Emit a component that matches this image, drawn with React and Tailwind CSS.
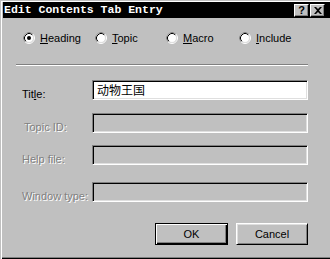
import React from "react";

const sans = "font-['Liberation_Sans',Arial,sans-serif] text-[11px]";

const Radio = ({ checked }) => (
  <svg width="12" height="12" viewBox="0 0 12 12" className="shrink-0">
    <circle cx="6" cy="6" r="5.5" fill="none" stroke="#fff" />
    <path d="M2.11 9.89 A5.5 5.5 0 0 1 9.89 2.11" fill="none" stroke="#808080" />
    <circle cx="6" cy="6" r="4.5" fill="#fff" stroke="#dfdfdf" />
    <path d="M2.82 9.18 A4.5 4.5 0 0 1 9.18 2.82" fill="none" stroke="#000" />
    {checked && <circle cx="6" cy="6" r="2" fill="#000" />}
  </svg>
);

const Option = ({ width, checked, first, rest }) => (
  <div className={`flex items-center gap-[5px] ${width}`}>
    <Radio checked={checked} />
    <span className="text-black leading-[13px]">
      <span className="underline underline-offset-1">{first}</span>
      {rest}
    </span>
  </div>
);

const Field = ({ label, value, enabled, gap }) => (
  <div className={`flex items-start ${gap}`}>
    <div
      className={`w-[92px] shrink-0 pl-[22px] mt-[8px] leading-[13px] whitespace-nowrap ${
        enabled
          ? "text-black"
          : "text-[#808080] [text-shadow:1px_1px_0_#fff]"
      }`}
    >
      {label}
    </div>
    <div
      className={`w-[216px] h-[20px] border border-t-[#808080] border-l-[#808080] border-b-white border-r-white shadow-[inset_1px_1px_0_#000,inset_-1px_-1px_0_#dfdfdf] flex items-center pl-[4px] ${
        enabled ? "bg-white" : "bg-[#c0c0c0]"
      }`}
    >
      {value && (
        <span className="font-['Noto_Sans_CJK_SC',sans-serif] text-[12px] leading-[14px] text-black">
          {value}
        </span>
      )}
    </div>
  </div>
);

export default function App() {
  return (
    <div
      className={`w-[330px] h-[259px] bg-[#c0c0c0] overflow-hidden ${sans} shadow-[inset_1px_1px_0_#c0c0c0,inset_2px_2px_0_#fff,inset_0_-1px_0_#000,inset_0_-2px_0_#808080]`}
    >
      {/* Title bar */}
      <div className="ml-[3px] mt-[2px] h-[16px] bg-black flex items-center">
        <span className="pl-[1px] text-white font-bold font-['Liberation_Mono',monospace] text-[11.5px] leading-[14px] whitespace-nowrap">
          Edit Contents Tab Entry
        </span>
        <div className="ml-auto mr-[5px] flex gap-[1px]">
          <div className="w-[15px] h-[13px] bg-[#c0c0c0] border border-t-white border-l-white border-b-black border-r-black shadow-[inset_-1px_-1px_0_#808080] flex items-center justify-center">
            <span className="font-bold text-[11px] leading-[11px] text-black">?</span>
          </div>
          <div className="w-[15px] h-[13px] bg-[#c0c0c0] border border-t-white border-l-white border-b-black border-r-black shadow-[inset_-1px_-1px_0_#808080] flex items-center justify-center">
            <svg width="8" height="7" viewBox="0 0 8 7">
              <path d="M0 0h2l2 2 2-2h2L5 3.5 8 7H6L4 5 2 7H0l3-3.5z" fill="#000" />
            </svg>
          </div>
        </div>
      </div>

      {/* Radio row */}
      <div className="mt-[14px] h-[12px] pl-[23px] flex">
        <Option width="w-[72px]" checked first="H" rest="eading" />
        <Option width="w-[71px]" first="T" rest="opic" />
        <Option width="w-[73px]" first="M" rest="acro" />
        <Option width="w-[70px]" first="I" rest="nclude" />
      </div>

      {/* Separator */}
      <div className="mt-[20px] ml-[16px] w-[292px] h-[2px] border-t border-t-[#808080] border-b border-b-white" />

      {/* Fields */}
      <Field gap="mt-[14px]" label={<>Tit<span className="underline underline-offset-1">l</span>e:</>} value="动物王国" enabled />
      <Field gap="mt-[12px]" label={<span className="pl-[2px]">Topic ID:</span>} />
      <Field gap="mt-[11px]" label="Help file:" />
      <Field gap="mt-[16px]" label="Window type:" />

      {/* Buttons */}
      <div className="mt-[20px] pl-[155px] flex gap-[8px]">
        <button className="w-[73px] h-[22px] bg-[#c0c0c0] border border-black shadow-[inset_1px_1px_0_#fff,inset_-1px_-1px_0_#000,inset_-2px_-2px_0_#808080] text-black leading-[13px]">
          OK
        </button>
        <button className="w-[72px] h-[22px] bg-[#c0c0c0] border border-t-white border-l-white border-b-black border-r-black shadow-[inset_1px_1px_0_#dfdfdf,inset_-1px_-1px_0_#808080] text-black leading-[13px]">
          Cancel
        </button>
      </div>
    </div>
  );
}
